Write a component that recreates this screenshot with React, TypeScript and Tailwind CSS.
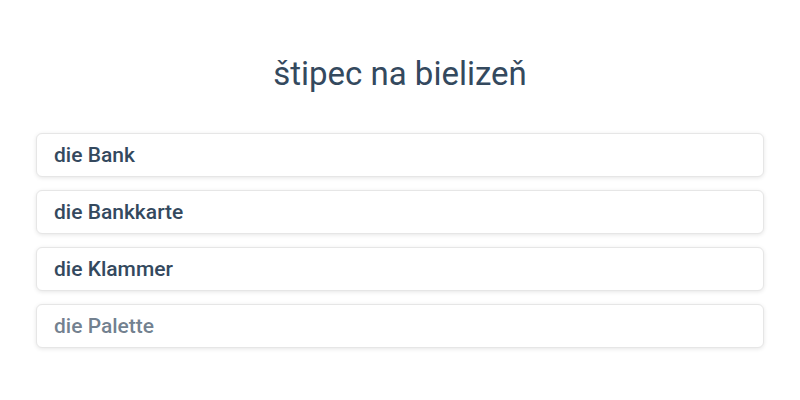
const options = ["die Bank", "die Bankkarte", "die Klammer", "die Palette"];

export default function App() {
  return (
    <div className="min-h-[400px] bg-white px-[36px] pt-[52px]" style={{ fontFamily: "Roboto, 'Noto Sans', sans-serif" }}>
      <h1 className="text-center text-[33px] leading-[44px] text-[#34495e]">štipec na bielizeň</h1>
      <div className="mt-[37px] flex flex-col gap-[13px]">
        {options.map((o, i) => (
          <button
            key={o}
            type="button"
            className={
              "flex h-[44px] items-center rounded-[6px] border border-[#e6e6e6] bg-white px-[17px] pt-[2px] text-left text-[21px] font-medium shadow-[0_1px_4px_rgba(0,0,0,0.1)] " +
              (i === 3 ? "text-[#34495e]/70" : "text-[#34495e]")
            }
          >
            {o}
          </button>
        ))}
      </div>
    </div>
  );
}
